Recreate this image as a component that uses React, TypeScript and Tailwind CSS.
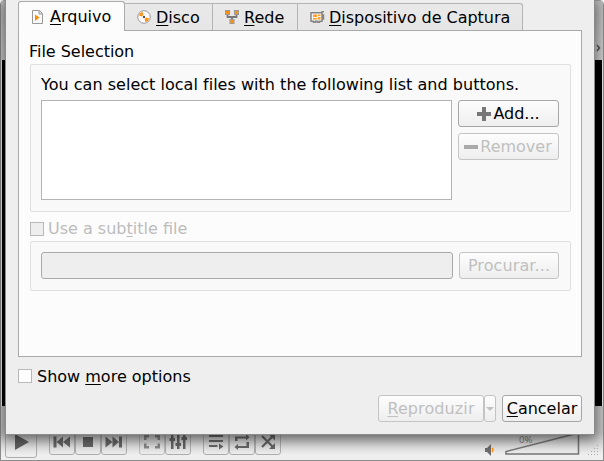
import type { ReactNode } from 'react';

const U = ({ children }: { children: ReactNode }) => (
  <span className="underline decoration-1 underline-offset-[2px] [text-decoration-skip-ink:none]">{children}</span>
);

const FileIcon = () => (
  <svg width="11" height="14" viewBox="0 0 11 14" className="shrink-0">
    <path d="M.5 .5H7.500L10.500 3.500V13.500H.5z" fill="#fafafa" stroke="#999" />
    <path d="M7 .5v3.500h3.500" fill="#ddd" stroke="#999" />
    <path d="M3 4.500l4.500 3-4.500 3.500z" fill="#ff8c00" />
  </svg>
);

const DiscIcon = () => (
  <svg width="14" height="14" viewBox="0 0 14 14" className="shrink-0">
    <circle cx="7" cy="7" r="6.300" fill="#fafafa" stroke="#999" />
    <path d="M7 7L1.800 5.500A5.500 5.500 0 0 1 5.500 1.700zM7 7l5.200 1.500a5.500 5.500 0 0 1-3.700 3.800z" fill="#ff9210" />
    <circle cx="7" cy="7" r="2" fill="#eee" />
    <rect x="6" y="6" width="2" height="2" fill="#555" />
  </svg>
);

const NetIcon = () => (
  <svg width="14" height="14" viewBox="0 0 14 14" className="shrink-0">
    <path d="M2.500 5v2h9V5M7 7v3" fill="none" stroke="#777" strokeWidth="1.800" />
    <g fill="#ff9210" stroke="#999">
      <rect x=".5" y=".5" width="4" height="4" />
      <rect x="9.500" y=".5" width="4" height="4" />
      <rect x="5" y="9.500" width="4" height="4" />
    </g>
  </svg>
);

const CardIcon = () => (
  <svg width="15" height="13" viewBox="0 0 15 13" className="shrink-0">
    <path d="M14 .8h-2V2M1 1.700h11v8.600H9.500v1h-2v-1h-2v1h-2v-1H1zM12.500 4h1v4h-1" fill="#f4f4f4" stroke="#858585" strokeWidth="1.500" />
    <path d="M3 3.500h4v2.500H3zM3 7h4v1.500H3zM8 3.500h2.500V5H8zM8 6h2.500v2.500H8z" fill="#ff9d28" />
  </svg>
);

const Tab = ({ icon, children, cls }: { icon: ReactNode; children: ReactNode; cls: string }) => (
  <div className={`flex h-[27px] shrink-0 items-center border-t border-r border-[#b4b4b4] bg-linear-to-b from-[#e9e9e9] to-[#e6e6e6] leading-[19px] ${cls}`}>
    {icon}
    {children}
  </div>
);

const Tool = ({ children, cls }: { children: ReactNode; cls: string }) => (
  <div className={`flex h-[29px] w-[26px] shrink-0 items-end justify-center rounded-[3px] border border-[#adadad] pb-[3px] ${cls}`}>
    <svg width="18" height="18" viewBox="0 0 18 18" fill="#666" stroke="none">
      {children}
    </svg>
  </div>
);

const MainWindow = () => (
  <div className="flex h-[461px] w-[604px] flex-col overflow-hidden rounded-t-[5px] border-x border-b border-[#8b8b8b] bg-[#efefef]">
    <div className="flex h-[60px] shrink-0 items-end justify-end border-t border-[#999] bg-linear-to-b from-[#bdbdbd] to-[#d2d2d2]">
      <svg width="5" height="8" viewBox="0 0 5 8" className="mr-[2px] mb-[8px]">
        <path d="M1 1l2.500 3L1 7" fill="none" stroke="#555" strokeWidth="1.500" />
      </svg>
    </div>
    <div className="mx-px h-[346px] shrink-0 bg-black" />
    <div className="flex grow items-start bg-linear-to-b from-[#c9c9c9] from-50% to-[#efefef] to-90%">
      <div className="ml-1 mt-[22px] flex h-[30px] w-[32px] shrink-0 items-end justify-center rounded-[3px] border border-[#adadad]">
        <svg width="14" height="16" viewBox="0 0 14 16" className="mb-[7px] ml-px">
          <path d="M0 0l14 8-14 8z" fill="#606060" />
        </svg>
      </div>
      <div className="mt-[20px] ml-[12px] flex">
        <Tool cls="">
          <path d="M.5 3.500H3.500v11H.5zM10 3.500v11L3.500 9zM17 3.500v11L10 9z" />
        </Tool>
        <Tool cls=""><path d="M4 4h10v10H4z" /></Tool>
        <Tool cls="">
          <path d="M14 3.500H17v11H14zM7.500 3.500v11L14 9zM.5 3.500v11l7-5.500z" />
        </Tool>
        <Tool cls="ml-[12px] opacity-70">
          <path d="M1 2h5v2.500H3.500V7H1zM12 2h5v5h-2.500V4.500H12zM1 10.500h2.500V13H6v2.500H1zM14.500 10.500H17v5h-5V13h2.500z" />
        </Tool>
        <Tool cls="">
          <path d="M2 0h2.500v16H2zM8 0h2.500v16H8zM14 0h2.500v16H14zM.5 5H6v3H.5zM6.500 10H12v3H6.500zM12.500 4H18v3h-5.500z" />
        </Tool>
        <Tool cls="ml-[12px]">
          <path d="M2 2h14v2H2zM2 7h14v2H2zM2 12h8.500v2H2zM12 10.500v6l4.500-3z" />
        </Tool>
        <Tool cls="">
          <path d="M2 8V3.500h11V1l3.500 3.300L13 7.500V5.500H4.500V8zM16 9v6H5v2L1.500 14 5 11v2h8.500V9z" />
        </Tool>
        <Tool cls="">
          <path d="M3 3l11 11M3 14L14 3" stroke="#666" strokeWidth="2.300" fill="none" />
          <path d="M10.500 2h5.500v5.500zM16 10v6h-6z" />
        </Tool>
      </div>
      <svg width="10" height="12" viewBox="0 0 10 12" className="mt-[38px] ml-[204px] shrink-0">
        <path d="M0 4h2l4-4v12L2 8H0z" fill="#6c6c6c" />
        <path d="M7 4q2 2 0 4" fill="none" stroke="#ff9210" strokeWidth="1.500" />
      </svg>
      <svg width="76" height="28" viewBox="0 0 76 28" className="mt-[21px] ml-[9px] shrink-0">
        <path d="M2 27V24.500L74.500 6v21z" fill="none" stroke="#777" strokeWidth="1.600" />
        <text x="15" y="15.500" fontSize="9.500" fill="#777" fontFamily="Open Sans, sans-serif">0%</text>
      </svg>
      <svg width="10" height="11" viewBox="0 0 10 11" className="mt-[39px] ml-[8px] shrink-0">
        <path d="M9 0h1v1H9zM6 3h1v1H6zM9 3h1v1H9zM3 6h1v1H3zM6 6h1v1H6zM9 6h1v1H9zM0 9h1v1H0zM3 9h1v1H3zM6 9h1v1H6zM9 9h1v1H9z" fill="#aaa" />
      </svg>
    </div>
  </div>
);

const button = 'flex h-[27px] shrink-0 items-center justify-center rounded-[3px] border bg-linear-to-b from-[#fdfdfd] to-[#eee] leading-[19px]';
const enabled = 'border-[#a6a6a6] text-black';
const disabled = 'border-[#c4c4c4] text-[#c0c0c0]';

const Dialog = () => (
  <div className="absolute top-0 left-[5px] h-[435px] w-[590px] border-x border-b border-[#8b8b8b] bg-[#eee] px-[12px] shadow-[0_3px_12px_2px_rgba(0,0,0,0.5)]">
    <div className="flex h-[31px] items-end pt-px">
      <div className="z-10 flex h-[30px] w-[107px] shrink-0 items-center gap-[7px] rounded-t-[3px] border-x border-t border-[#acacac] bg-[#fcfcfc] pl-[13px] leading-[19px]">
        <FileIcon />
        <span><U>A</U>rquivo</span>
      </div>
      <div className="flex h-[28px] grow items-start border-b border-[#a9a9a9]">
        <Tab cls="w-[88px] gap-[5px] pl-[12px]" icon={<DiscIcon />}><span><U>D</U>isco</span></Tab>
        <Tab cls="w-[85px] gap-[5px] pl-[12px]" icon={<NetIcon />}><span><U>R</U>ede</span></Tab>
        <Tab cls="w-[225px] gap-[4px] rounded-tr-[3px] pl-[12px]" icon={<CardIcon />}><span className="tracking-[-0.03px]"><U>D</U>ispositivo de Captura</span></Tab>
      </div>
    </div>
    <div className="h-[326px] border-x border-b border-[#a9a9a9] bg-[#fcfcfc] px-[11px] pt-[11px]">
      <div className="-ml-px h-[22px] leading-[19px] tracking-[-0.03px]">File Selection</div>
      <div className="h-[148px] w-[541px] rounded-[2px] border border-[#e0e0e0] bg-[#f9f9f9] px-[10px] pt-[9px]">
        <div className="h-[26px] leading-[21px] tracking-[0.025px] whitespace-nowrap">You can select local files with the following list and buttons.</div>
        <div className="flex gap-[6px]">
          <div className="h-[100px] w-[411px] border border-[#b3b3b3] bg-white" />
          <div className="flex w-[101px] flex-col gap-[6px]">
            <div className={`${button} ${enabled} gap-[2px]`}>
              <svg width="14" height="14" viewBox="0 0 14 14"><path d="M5 0h4v5h5v4H9v5H5V9H0V5h5z" fill="#777" /></svg>
              Add...
            </div>
            <div className={`${button} ${disabled} gap-[2px] pr-px`}>
              <svg width="14" height="4" viewBox="0 0 14 4"><path d="M0 0h14v4H0z" fill="#aaa" /></svg>
              Remover
            </div>
          </div>
        </div>
      </div>
      <div className="mt-[5px] mb-px flex h-[23px] items-center gap-[4px] text-[#bcbcbc]">
        <div className="h-[14px] w-[14px] border border-[#b9b9b9] bg-[#eee]" />
        <span className="leading-[19px]">Use a sub<U>t</U>itle file</span>
      </div>
      <div className="flex h-[50px] w-[541px] gap-[6px] rounded-[2px] border border-[#e0e0e0] bg-[#f9f9f9] px-[10px] pt-[10px]">
        <div className="h-[27px] w-[412px] shrink-0 rounded-[3px] border border-[#a9a9a9] bg-[#eee]" />
        <div className={`${button} ${disabled} w-[100px] tracking-[0.1px]`}>Procurar...</div>
      </div>
    </div>
    <div className="mt-[9px] flex h-[20px] items-center gap-[5px]">
      <div className="h-[14px] w-[14px] border border-[#b9b9b9] bg-white" />
      <span className="leading-[19px]">Show <U>m</U>ore options</span>
    </div>
    <div className="mt-[9px] flex justify-end">
      <div className={`${button} ${disabled} w-[106px] tracking-[0.1px]`}><span><U>R</U>eproduzir</span></div>
      <div className={`${button} ${disabled} w-[12px]`}>
        <svg width="8" height="4" viewBox="0 0 8 4" className="shrink-0"><path d="M0 0h8L4 4z" fill="#c0c0c0" /></svg>
      </div>
      <div className={`${button} ${enabled} ml-[6px] w-[80px]`}><span><U>C</U>ancelar</span></div>
    </div>
  </div>
);

export default function App() {
  return (
    <div className="relative h-[461px] w-[604px] overflow-hidden bg-white text-[16px] text-black [font-family:'DejaVu_Sans',sans-serif]">
      <MainWindow />
      <Dialog />
    </div>
  );
}
